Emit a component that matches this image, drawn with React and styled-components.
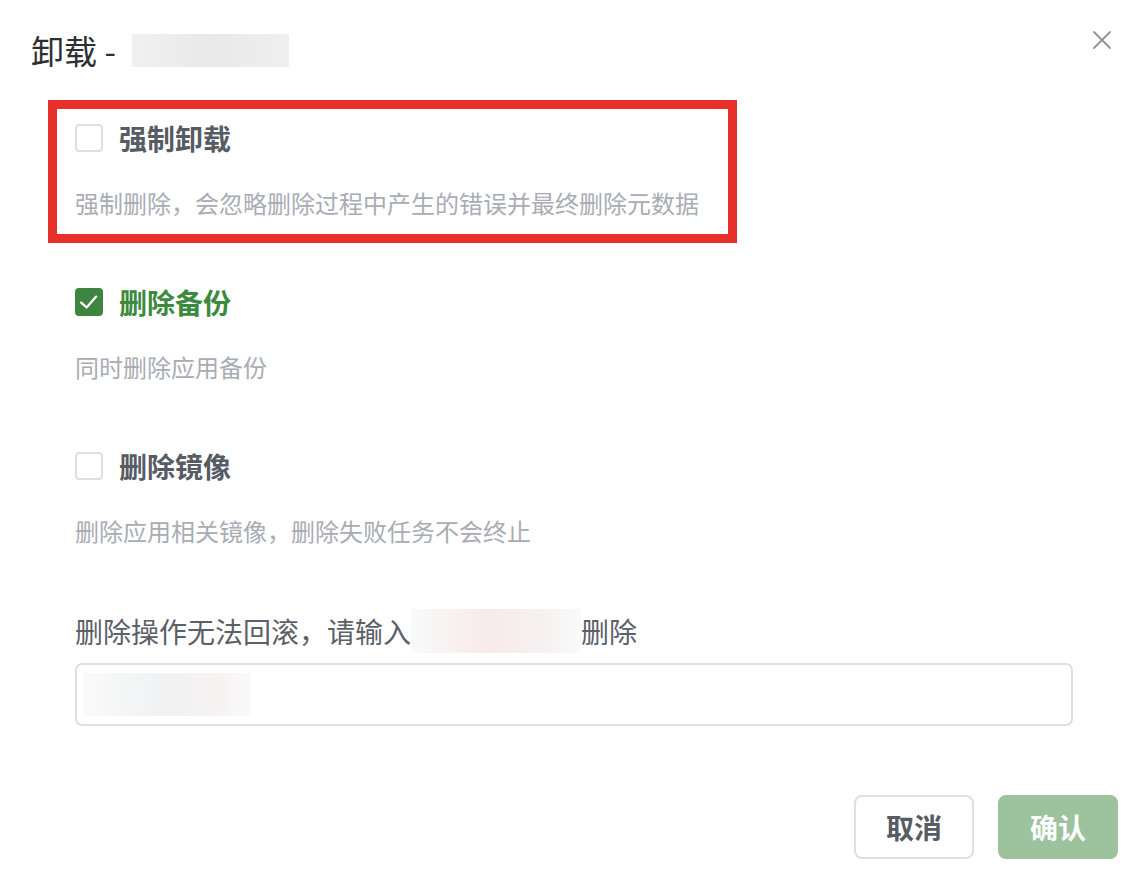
import styled, { createGlobalStyle } from 'styled-components';

const GlobalStyle = createGlobalStyle`
  body {
    margin: 0;
    background: #ffffff;
    font-family: "Noto Sans CJK SC", "Noto Sans", sans-serif;
  }
`;

const options = [
  { key: 'force', label: '强制卸载', desc: '强制删除，会忽略删除过程中产生的错误并最终删除元数据', checked: false, marked: true },
  { key: 'backup', label: '删除备份', desc: '同时删除应用备份', checked: true },
  { key: 'image', label: '删除镜像', desc: '删除应用相关镜像，删除失败任务不会终止', checked: false },
];

const App = () => {
  return (
    <>
      <GlobalStyle />
      <StyledDialog>
        <StyledHeader>
          <h2>
            卸载 - <Masked $w={157} $h={33} />
          </h2>
          <CloseButton aria-label="close">
            <svg width="20" height="20" viewBox="0 0 20 20">
              <path d="M2 2 L18 18 M18 2 L2 18" stroke="#8f9298" strokeWidth="1.8" strokeLinecap="round" />
            </svg>
          </CloseButton>
        </StyledHeader>
        <StyledBody>
          <OptionList>
            {options.map((o) => (
              <Option key={o.key} $marked={o.marked}>
                <OptionRow>
                  <Box $checked={o.checked}>
                    {o.checked && (
                      <svg width="24" height="24" viewBox="0 0 20 20">
                        <polyline points="3.5,10.5 8,14.5 16,5.5" fill="none" stroke="#fff" strokeWidth="1.9" strokeLinecap="round" strokeLinejoin="round" />
                      </svg>
                    )}
                  </Box>
                  <OptionLabel $checked={o.checked}>{o.label}</OptionLabel>
                </OptionRow>
                <OptionDesc>{o.desc}</OptionDesc>
              </Option>
            ))}
          </OptionList>
          <ConfirmLabel>
            删除操作无法回滚，请输入<Masked $w={170} $h={44} $tint="#f8eaea" />删除
          </ConfirmLabel>
          <ConfirmInput>
            <Masked $w={168} $h={43} $tint="#f1f2f3" />
          </ConfirmInput>
        </StyledBody>
        <StyledFooter>
          <Button>取消</Button>
          <Button $primary>确认</Button>
        </StyledFooter>
      </StyledDialog>
    </>
  );
};

/**
 * Styled Components
 */
const StyledDialog = styled.div`
  width: 1146px;
  height: 886px;
  box-sizing: border-box;
  background: #fff;
`;

const StyledHeader = styled.div`
  display: flex;
  justify-content: space-between;
  align-items: flex-start;
  padding: 30px 32px 0 31px;
  h2 {
    display: flex;
    align-items: center;
    gap: 16px;
    margin: 0;
    height: 40px;
    font-size: 33px;
    line-height: 40px;
    font-weight: 400;
    color: #2e2f33;
  }
`;

const CloseButton = styled.button`
  border: none;
  background: none;
  padding: 0;
  margin-top: -2px;
  width: 24px;
  height: 24px;
  display: flex;
  align-items: center;
  justify-content: center;
`;

const Masked = styled.span`
  display: inline-block;
  flex-shrink: 0;
  width: ${(p) => p.$w}px;
  height: ${(p) => p.$h}px;
  background: ${(p) =>
    p.$tint
      ? `linear-gradient(90deg, #fafafa, ${p.$tint} 45%, #f6f2f2 80%, #fafafa)`
      : 'linear-gradient(90deg, #f0f0f0, #e9e9e9 50%, #efefef)'};
  filter: blur(0.6px);
`;

const StyledBody = styled.div`
  padding: 48px 73px 0 75px;
`;

const OptionList = styled.div`
  display: flex;
  flex-direction: column;
  gap: 63px;
`;

const Option = styled.div`
  display: flex;
  flex-direction: column;
  gap: 29px;
  ${(p) =>
    p.$marked &&
    `
    width: fit-content;
    border: 9px solid #e8302a;
    padding: 9px 29px 15px 18px;
    margin: -18px 0 -24px -27px;
  `}
`;

const OptionRow = styled.div`
  display: flex;
  align-items: center;
  gap: 16px;
  height: 40px;
`;

const Box = styled.span`
  width: 28px;
  height: 28px;
  box-sizing: border-box;
  border-radius: 4px;
  border: 2px solid ${(p) => (p.$checked ? '#3e8541' : '#dcdfe5')};
  background: ${(p) => (p.$checked ? '#3e8541' : '#fff')};
  display: flex;
  align-items: center;
  justify-content: center;
`;

const OptionLabel = styled.span`
  font-size: 28px;
  font-weight: 700;
  line-height: 40px;
  color: ${(p) => (p.$checked ? '#3b8a3e' : '#575b63')};
`;

const OptionDesc = styled.div`
  font-size: 24px;
  line-height: 32px;
  color: #a9acb4;
`;

const ConfirmLabel = styled.div`
  display: flex;
  align-items: center;
  height: 40px;
  margin-top: 64px;
  font-size: 28px;
  line-height: 40px;
  color: #5c6068;
`;

const ConfirmInput = styled.div`
  margin-top: 12px;
  height: 63px;
  box-sizing: border-box;
  border: 2px solid #dcdfe5;
  border-radius: 7px;
  padding: 8px 6px;
  display: flex;
  align-items: center;
`;

const StyledFooter = styled.div`
  display: flex;
  justify-content: flex-end;
  gap: 24px;
  padding: 69px 28px 0 0;
`;

const Button = styled.button`
  width: 120px;
  height: 64px;
  box-sizing: border-box;
  border-radius: 8px;
  font-family: inherit;
  font-size: 28px;
  font-weight: 700;
  border: 2px solid ${(p) => (p.$primary ? '#9cc39e' : '#dcdfe5')};
  background: ${(p) => (p.$primary ? '#9cc39e' : '#fff')};
  color: ${(p) => (p.$primary ? '#fff' : '#575b63')};
`;

export default App;
